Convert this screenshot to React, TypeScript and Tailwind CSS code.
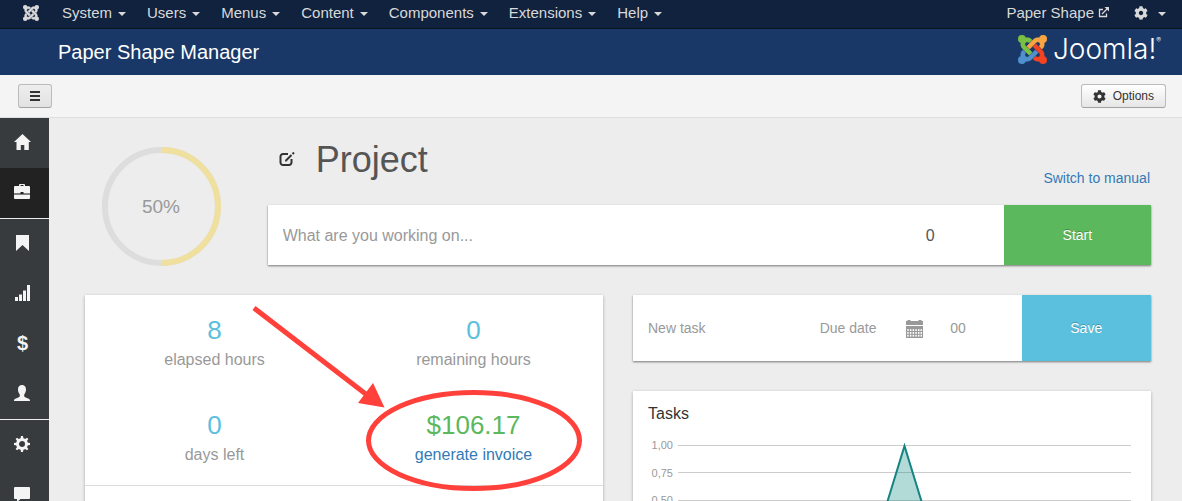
import type { ReactNode } from 'react';
import { FaCog } from 'react-icons/fa';

const menus = ['System', 'Users', 'Menus', 'Content', 'Components', 'Extensions', 'Help'];

const ARM =
  'M16.719 14.759L14.22 17.26l-2.37 2.37-.462.466c-1.368 1.365-3.297 1.83-5.047 1.397-.327 1.424-1.604 2.49-3.13 2.49C1.438 23.983 0 22.547 0 20.772c0-1.518 1.055-2.789 2.469-3.123-.446-1.76.016-3.705 1.396-5.08l.179-.18 2.37 2.37-.184.181c-.769.779-.769 2.024 0 2.789.771.78 2.022.78 2.787 0l.465-.465 2.367-2.371 2.502-2.506z';

function JoomlaMark({ colors, className }: { colors: string[]; className: string }) {
  return (
    <svg viewBox="0 0 24 24" className={className} aria-hidden="true">
      {colors.map((color, i) => (
        <path key={i} d={ARM} fill={color} stroke={color} strokeWidth="0.5" transform={`rotate(${i * 90} 12 12)`} />
      ))}
    </svg>
  );
}

function Caret() {
  return <span className="mt-px border-x-4 border-t-4 border-x-transparent border-t-[#d9d9d9]" />;
}

function Icon({ children }: { children: ReactNode }) {
  return (
    <svg viewBox="0 0 16 16" className="size-4 overflow-visible" fill="currentColor" aria-hidden="true">
      {children}
    </svg>
  );
}

const sidebar = [
  { label: 'Dashboard', icon: <Icon><path d="M8.500 0 17 8h-2.200v8H10.300v-5H6.800v5H2.500V8H0z" /></Icon> },
  {
    label: 'Projects',
    active: true,
    icon: (
      <Icon>
        <path d="M5 2V.8A1 1 0 0 1 6 0h4a1 1 0 0 1 1 .8V2h4a1 1 0 0 1 1 1v6H9.500V8h-3v1H0V3a1 1 0 0 1 1-1zm1.500 0h3V1h-3z" />
        <path d="M0 9h6.500v1h3V9H16v2H0z" opacity=".45" />
        <path d="M0 11h16v3a1 1 0 0 1-1 1H1a1 1 0 0 1-1-1z" />
      </Icon>
    ),
    divider: true,
  },
  { label: 'Milestones', icon: <Icon><path d="M2 0h13v16l-6.500-6L2 16z" /></Icon> },
  {
    label: 'Reports',
    icon: <Icon><path d="M1 12h3v4H1zM5 9.500h3V16H5zM9 5.500h3V16H9zM13 0h3v16h-3z" /></Icon>,
  },
  { label: 'Invoices', icon: <span className="w-[17px] text-center text-xl font-bold">$</span> },
  {
    label: 'Clients',
    icon: (
      <Icon>
        <path d="M8 0c2.500 0 4 1.700 4 4.500 0 2-.8 3.800-1.800 4.900v1.700c0 .6.4.9 1 1.200l3.400 1.400c.9.4 1.400.9 1.400 2.300H0c0-1.400.5-1.900 1.400-2.300l3.400-1.400c.6-.3 1-.6 1-1.200V9.400C4.800 8.300 4 6.500 4 4.500 4 1.700 5.500 0 8 0z" />
      </Icon>
    ),
    divider: true,
  },
  {
    label: 'Settings',
    icon: (
      <Icon>
        {[0, 45, 90, 135].map((a) => (
          <path key={a} d="M6.500 3 7 0h2l.5 3zM6.500 13 7 16h2l.5-3z" transform={`rotate(${a} 8 8)`} />
        ))}
        <circle cx="8" cy="8" r="4.500" fill="none" stroke="currentColor" strokeWidth="3" />
      </Icon>
    ),
  },
  {
    label: 'Messages',
    icon: <Icon><path d="M1 1h14a1 1 0 0 1 1 1v10a1 1 0 0 1-1 1H6.500L3 16v-3H1a1 1 0 0 1-1-1V2a1 1 0 0 1 1-1z" /></Icon>,
  },
];

const calendarRows = [9.2, 12, 14.8];
const calendarCols = [1.2, 3.9, 6.6, 9.3, 12, 14.5];

function Stat({ value, children, money }: { value: string; children: ReactNode; money?: boolean }) {
  return (
    <div className="relative flex h-[95px] flex-col items-center pt-5 text-base text-[#999]">
      <span className={money ? 'text-[26px] leading-[30px] text-[#5cb85c]' : 'text-[26px] leading-[30px] text-[#5bc0de]'}>
        {value}
      </span>
      <span className="leading-[30px]">{children}</span>
      {money && (
        <svg className="pointer-events-none absolute left-1/2 top-0 size-px overflow-visible" aria-hidden="true">
          <ellipse cx="0" cy="50.500" rx="105.500" ry="48" fill="none" stroke="#ff403b" strokeWidth="5" />
          <path d="M-220-82-107 5" stroke="#ff403b" strokeWidth="5" />
          <path d="M-89.500 17.500-101-7l-15 20z" fill="#ff403b" />
        </svg>
      )}
    </div>
  );
}

const card = 'bg-white shadow-[0_1px_3px_rgba(0,0,0,0.3)]';
const bar = 'bg-white shadow-[0_1px_2px_rgba(0,0,0,0.5)]';
const toolButton =
  'flex h-6 items-center rounded-[3px] border border-[#bbb] border-b-[#a2a2a2] text-xs text-[#333]';

export default function App() {
  return (
    <div className="flex h-screen flex-col overflow-hidden bg-[#ededed] font-['Liberation_Sans',Arial,sans-serif]">
      <nav className="flex h-[29px] shrink-0 items-center border-b border-[#0d1420] bg-[#10223e] pb-0.5 pl-[23px] pr-4 text-[15px] leading-5 text-[#d9d9d9]">
        <JoomlaMark className="size-4" colors={['#d9d9d9', '#d9d9d9', '#d9d9d9', '#d9d9d9']} />
        <ul className="ml-[23px] flex gap-[21px]">
          {menus.map((m) => (
            <li key={m}>
              <a href="#" className="flex items-center gap-1.5">
                {m}
                <Caret />
              </a>
            </li>
          ))}
        </ul>
        <a href="#" className="ml-auto flex gap-1">
          Paper Shape
          <svg viewBox="0 0 11 11" className="mt-1 size-[11px]" fill="none" stroke="currentColor" aria-hidden="true">
            <path d="M5 2.500H1.500v7h7V6.500M4 7l5.500-5.500" strokeWidth="1.300" />
            <path d="M6.500 0H11v4.500z" fill="currentColor" stroke="none" />
          </svg>
        </a>
        <button type="button" aria-label="User menu" className="ml-[25px] flex items-center gap-2.5">
          <FaCog className="size-3.5" />
          <Caret />
        </button>
      </nav>

      <header className="flex h-[46px] shrink-0 items-center justify-between bg-[#1a3867] pl-[58px] pr-[21px] text-white">
        <h1 className="text-xl">Paper Shape Manager</h1>
        <a href="#" className="flex items-center gap-1.5 pb-1.5" aria-label="Joomla!">
          <JoomlaMark className="size-[29px]" colors={['#5091cd', '#7ac143', '#f9a541', '#f44321']} />
          <span className="flex font-['Inter',sans-serif] text-[28px] font-light leading-8">
            Joomla!
            <sup className="top-0 text-[7px] leading-4">®</sup>
          </span>
        </a>
      </header>

      <div className="flex shrink-0 justify-between border-b border-[#dfdfdf] bg-[#f4f4f4] py-[9px] pl-[18px] pr-4">
        <button type="button" aria-label="Toggle sidebar" className={`${toolButton} w-[34px] justify-center bg-linear-to-b from-[#eee] to-[#e2e2e2]`}>
          <svg viewBox="0 0 10 10" className="size-2.5" fill="currentColor" aria-hidden="true">
            <path d="M0 0h10v2H0zM0 4h10v2H0zM0 8h10v2H0z" />
          </svg>
        </button>
        <button type="button" className={`${toolButton} gap-[7px] bg-linear-to-b from-white to-[#e6e6e6] px-[11px]`}>
          <FaCog className="size-[13px]" />
          Options
        </button>
      </div>

      <div className="flex min-h-0 flex-1">
        <aside className="w-[49px] shrink-0 bg-[#373b3e] text-[#f4f4f4]">
          {sidebar.map((s) => (
            <a
              key={s.label}
              href="#"
              aria-label={s.label}
              className={`flex items-center pb-0.5 pl-3.5 ${s.active ? 'bg-[#222]' : ''} ${s.divider ? 'h-[51px] border-b border-[#eee]' : 'h-[50px]'}`}
            >
              {s.icon}
            </a>
          ))}
        </aside>

        <main className="min-w-0 flex-1 pl-9 pr-[31px] pt-5">
          <section className="grid grid-cols-6 gap-x-[30px]">
            <div className="flex justify-center pt-[9px]">
              <svg viewBox="0 0 119 119" className="size-[119px]" role="img" aria-label="50%">
                <circle cx="59.500" cy="59.500" r="56.500" fill="none" stroke="#ddd" strokeWidth="6" />
                <path d="M59.500 3a56.500 56.500 0 0 1 0 113" fill="none" stroke="#f0e09f" strokeWidth="6" />
                <text x="59" y="66" textAnchor="middle" fontSize="19" fill="#999">50%</text>
              </svg>
            </div>
            <div className="col-span-5">
              <div className="flex h-[67px] items-start">
                <button type="button" aria-label="Edit project" className="ml-[11px] mt-3.5 text-[#333]">
                  <svg viewBox="0 0 16 15" className="h-[15px] w-4" fill="none" stroke="currentColor" aria-hidden="true">
                    <path d="M9 2H4a2.500 2.500 0 0 0-2.500 2.500v6A2.500 2.500 0 0 0 4 13h6a2.500 2.500 0 0 0 2.500-2.500V7" strokeWidth="2" />
                    <path d="M7 8.500 12.500 3" strokeWidth="2" />
                    <path d="M13.500 2 15 .5" strokeWidth="2" />
                    <path d="M6 7.500v2h2z" fill="currentColor" stroke="none" />
                  </svg>
                </button>
                <h2 className="ml-[21px] text-4xl leading-[44px] text-[#555]">Project</h2>
                <a href="#" className="mb-[17px] ml-auto mr-px self-end text-sm text-[#337ab7]">Switch to manual</a>
              </div>
              <form className={`grid h-[60px] grid-cols-6 ${bar}`}>
                <input
                  aria-label="What are you working on"
                  placeholder="What are you working on..."
                  className="col-span-4 min-w-0 px-[15px] pt-0.5 text-base placeholder:text-[#999]"
                />
                <input aria-label="Time" defaultValue="0" className="min-w-0 pt-0.5 text-center text-base text-[#555]" />
                <button type="button" className="bg-[#5cb85c] text-sm text-white [text-shadow:0_-1px_0_rgba(0,0,0,0.25)]">
                  Start
                </button>
              </form>
            </div>
          </section>

          <section className="mt-[29px] grid grid-cols-2 gap-[30px]">
            <div className={`h-[420px] ${card}`}>
              <div className="grid grid-cols-2 border-b border-[#ddd]">
                <Stat value="8">elapsed hours</Stat>
                <Stat value="0">remaining hours</Stat>
                <Stat value="0">days left</Stat>
                <Stat value="$106.17" money>
                  <a href="#" className="text-[#337ab7]">generate invoice</a>
                </Stat>
              </div>
            </div>

            <div className="flex flex-col gap-[30px]">
              <form className={`grid h-[66px] grid-cols-12 text-sm ${bar}`}>
                <input aria-label="New task" placeholder="New task" className="col-span-4 min-w-0 px-[15px] placeholder:text-[#999]" />
                <div className="col-span-3 flex items-center pl-3.5 pr-3 text-[#999]">
                  <input aria-label="Due date" placeholder="Due date" className="min-w-0 flex-1 placeholder:text-[#999]" />
                  <svg viewBox="0 0 17 18" className="mt-0.5 h-[18px] w-[17px]" fill="currentColor" aria-hidden="true">
                    <path d="M0 1h1.500V0h3v1h8V0h3v1H17v4H0zM0 6h17v12H0z" />
                    {calendarRows.map((y) =>
                      calendarCols.map((x) => <rect key={`${x}-${y}`} x={x} y={y} width="1.500" height="1.800" fill="#fff" />),
                    )}
                  </svg>
                </div>
                <input aria-label="Hours" placeholder="00" className="col-span-2 min-w-0 px-[15px] placeholder:text-[#999]" />
                <button type="button" className="col-span-3 bg-[#5bc0de] text-white [text-shadow:0_-1px_0_rgba(0,0,0,0.25)]">
                  Save
                </button>
              </form>

              <div className={`flex-1 pl-[15px] pr-5 pt-3 ${card}`}>
                <h3 className="text-base leading-[22px] text-[#333]">Tasks</h3>
                <div className="mt-3 flex h-[126px] gap-[5px]">
                  <div className="flex w-[25px] flex-col justify-between text-right text-[11px] leading-4 text-[#999]">
                    {['1,00', '0,75', '0,50', '0,25', '0,00'].map((t) => (
                      <span key={t}>{t}</span>
                    ))}
                  </div>
                  <svg viewBox="0 0 453 110" preserveAspectRatio="none" className="mt-2 h-[110px] min-w-0 flex-1 overflow-visible" aria-hidden="true">
                    {[0, 27, 55, 82, 110].map((y) => (
                      <path key={y} d={`M0 ${y + 0.5}h453`} stroke="#ccc" />
                    ))}
                    <path d="M0 110h193l33.500-109L260 110h193" fill="#00857b" fillOpacity=".3" stroke="#168482" strokeWidth="2" />
                  </svg>
                </div>
              </div>
            </div>
          </section>
        </main>
      </div>
    </div>
  );
}
